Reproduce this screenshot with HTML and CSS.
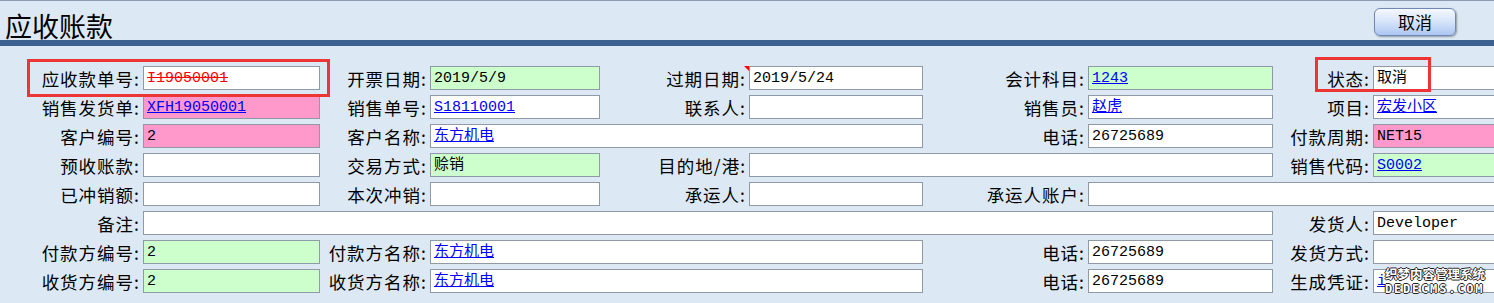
FILE: index.html
```html
<!DOCTYPE html>
<html lang="zh-CN">
<head>
    <meta charset="UTF-8">
    <title>应收账款</title>
    <link rel="stylesheet" href="styles.css">
</head>
<body>
    <div class="head">
        <h1>应收账款</h1>
        <button class="btn">取消</button>
    </div>
    <div class="bar"></div>

    <div class="form">
        <!-- 第一行 -->
        <div class="lbl">应收款单号:</div>
        <div class="fld"><span class="void">I19050001</span></div>
        <div class="lbl">开票日期:</div>
        <div class="fld green">2019/5/9</div>
        <div class="lbl">过期日期:</div>
        <div class="fld req">2019/5/24</div>
        <div class="lbl">会计科目:</div>
        <div class="fld green"><a href="#">1243</a></div>
        <div class="lbl">状态:</div>
        <div class="fld">取消</div>

        <div class="lbl">销售发货单:</div>
        <div class="fld pink"><a href="#">XFH19050001</a></div>
        <div class="lbl">销售单号:</div>
        <div class="fld"><a href="#">S18110001</a></div>
        <div class="lbl">联系人:</div>
        <div class="fld"></div>
        <div class="lbl">销售员:</div>
        <div class="fld"><a href="#">赵虎</a></div>
        <div class="lbl">项目:</div>
        <div class="fld"><a href="#">宏发小区</a></div>

        <div class="lbl">客户编号:</div>
        <div class="fld pink">2</div>
        <div class="lbl">客户名称:</div>
        <div class="fld span3"><a href="#">东方机电</a></div>
        <div class="lbl">电话:</div>
        <div class="fld">26725689</div>
        <div class="lbl">付款周期:</div>
        <div class="fld pink">NET15</div>

        <div class="lbl">预收账款:</div>
        <div class="fld"></div>
        <div class="lbl">交易方式:</div>
        <div class="fld green">赊销</div>
        <div class="lbl">目的地/港:</div>
        <div class="fld span3"></div>
        <div class="lbl">销售代码:</div>
        <div class="fld green"><a href="#">S0002</a></div>

        <div class="lbl">已冲销额:</div>
        <div class="fld"></div>
        <div class="lbl">本次冲销:</div>
        <div class="fld"></div>
        <div class="lbl">承运人:</div>
        <div class="fld"></div>
        <div class="lbl">承运人账户:</div>
        <div class="fld span3"></div>

        <div class="lbl">备注:</div>
        <div class="fld span7"></div>
        <div class="lbl">发货人:</div>
        <div class="fld">Developer</div>

        <div class="lbl">付款方编号:</div>
        <div class="fld green">2</div>
        <div class="lbl">付款方名称:</div>
        <div class="fld span3"><a href="#">东方机电</a></div>
        <div class="lbl">电话:</div>
        <div class="fld">26725689</div>
        <div class="lbl">发货方式:</div>
        <div class="fld"></div>

        <div class="lbl">收货方编号:</div>
        <div class="fld green">2</div>
        <div class="lbl">收货方名称:</div>
        <div class="fld span3"><a href="#">东方机电</a></div>
        <div class="lbl">电话:</div>
        <div class="fld">26725689</div>
        <div class="lbl">生成凭证:</div>
        <div class="fld"><a href="#">i</a></div>
    </div>

    <!-- 标注框 -->
    <div class="mark mark-no"></div>
    <div class="mark mark-state"></div>

    <div class="wm">
        <div class="wm-cn">织梦内容管理系统</div>
        <div class="wm-en">DEDECMS.COM</div>
    </div>
</body>
</html>
```

FILE: styles.css
```css
body {
    margin: 0;
    padding: 0;
    background-color: #dce9f5;
    font-family: "Noto Sans CJK SC", sans-serif;
    color: #000;
    overflow: hidden;
    width: 1494px;
    height: 303px;
    position: relative;
}

.head {
    height: 39px;
    border-top: 1px solid #8a9bb0;
    display: flex;
    align-items: center;
    justify-content: space-between;
    padding: 0 38px 0 5px;
}

.head h1 {
    margin: 0;
    font-size: 27px;
    font-weight: normal;
    line-height: 1;
    padding-top: 10px;
}

.btn {
    width: 82px;
    height: 28px;
    margin-top: 2px;
    border: 1px solid #7189b2;
    border-radius: 6px;
    background: linear-gradient(#f5f8fe, #d6e4fa 50%, #abc6f2);
    box-shadow: 1px 1px 2px rgba(0, 0, 0, 0.35);
    font-family: "Noto Sans CJK SC", sans-serif;
    font-size: 17px;
    line-height: 1;
    padding: 0;
    color: #000;
}

.bar {
    height: 6px;
    background-color: #3a6190;
}

.form {
    display: grid;
    grid-template-columns: 143px 177px 110px 170px 149px 174px 165px 185px 100px 140px;
    grid-auto-rows: 24px;
    row-gap: 5px;
    padding-top: 20px;
}

.lbl {
    text-align: right;
    padding-right: 3px;
    font-size: 17.5px;
    letter-spacing: 1px;
    line-height: 25px;
    white-space: nowrap;
}

.fld {
    box-sizing: border-box;
    border: 1px solid #8f9aa6;
    background-color: #fff;
    padding: 1px 3px 0;
    font-family: "Liberation Mono", "Noto Sans CJK SC", monospace;
    font-size: 15px;
    line-height: 22px;
    white-space: nowrap;
    overflow: hidden;
}

.fld a {
    color: #0000ff;
}

.green {
    background-color: #ccffcc;
}

.pink {
    background-color: #ff99cc;
}

.span3 {
    grid-column: span 3;
}

.span7 {
    grid-column: span 7;
}

.void {
    color: #ff0000;
    text-decoration: line-through;
}

.req {
    position: relative;
    overflow: visible;
}

.req::before {
    content: "";
    position: absolute;
    left: -6px;
    top: -1px;
    width: 0;
    height: 0;
    border-top: 5px solid #ff0000;
    border-left: 5px solid transparent;
}

.mark {
    position: absolute;
    border: 3px solid #ee3535;
}

.mark-no {
    left: 27px;
    top: 59px;
    width: 297px;
    height: 32px;
}

.mark-state {
    left: 1315px;
    top: 57px;
    width: 110px;
    height: 29px;
}

.wm {
    position: absolute;
    left: 1385px;
    top: 267px;
    width: 102px;
    color: #fff;
    font-weight: bold;
    text-shadow: 1px 0 0 #222, -1px 0 0 #222, 0 1px 0 #222, 0 -1px 0 #222;
}

.wm-cn {
    font-size: 12.5px;
    line-height: 14px;
}

.wm-en {
    margin-top: 3px;
    font-family: "DejaVu Sans Mono", monospace;
    font-size: 12px;
    line-height: 10px;
    letter-spacing: 1.8px;
}
```
